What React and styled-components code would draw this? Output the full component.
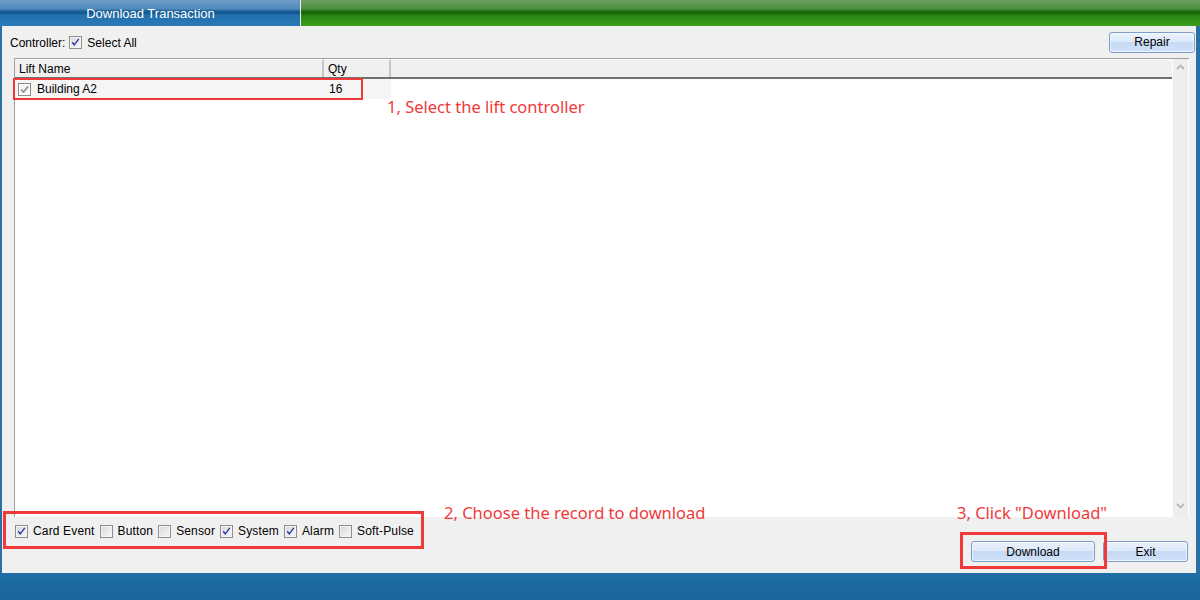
import React from 'react';
import styled, { createGlobalStyle } from 'styled-components';

const GlobalStyle = createGlobalStyle`
    html, body{
        margin: 0;
        padding: 0;
        background-color: #1b679e;
    }
    *{
        box-sizing: border-box;
    }
`;

const Frame = styled.div`
    position: relative;
    width: 1200px;
    height: 600px;
    display: flex;
    flex-direction: column;
    font-family: 'Liberation Sans', Arial, sans-serif;
    font-size: 12px;
    color: #000000;
    overflow: hidden;
`;

const TitleBar = styled.div`
    height: 26px;
    display: flex;

    .tab{
        width: 300px;
        display: flex;
        justify-content: center;
        align-items: center;
        color: #ffffff;
        font-size: 13px;
        padding-left: 1px;
        background: linear-gradient(to bottom, #6e9cc5 0px, #5089bb 9px, #1b5f97 11px, #0f5592 13px, #236fab 15px, #2b7aba 26px);
    }

    .divider{
        width: 1px;
        background-color: #e8f0e4;
    }

    .fill{
        flex: 1;
        background: linear-gradient(to bottom, #6c9f62 0px, #4e8e40 9px, #1f6c10 11px, #176508 13px, #2a8712 16px, #3b9d1c 26px);
    }
`;

const Body = styled.div`
    flex: 1;
    display: flex;
    flex-direction: column;
    background-color: #f0f0f0;
    border-left: 2px solid #2a6fa6;
    border-right: 4px solid #2a6fa6;
`;

const Toolbar = styled.div`
    height: 32px;
    display: flex;
    align-items: center;
    justify-content: space-between;
    padding: 0 1px 0 8px;

    .controller{
        display: flex;
        align-items: center;
        gap: 4px;
        padding-top: 1px;
    }
`;

const CheckLabel = styled.label`
    display: inline-flex;
    align-items: center;
    gap: ${p => p.gap || 5}px;
    white-space: nowrap;
`;

const Box = styled.span`
    width: 13px;
    height: 13px;
    display: inline-flex;
    justify-content: center;
    align-items: center;
    border: 1px solid ${p => p.muted ? '#8a8a8a' : '#8e8f8f'};
    background: ${p => p.muted
        ? '#f4f4f4'
        : 'linear-gradient(135deg, #d8d8d8 0%, #ececec 60%, #f8f8f8 100%)'};
    box-shadow: inset 0 0 0 1px ${p => p.muted ? '#ffffff' : '#f4f4f4'};

    svg{
        display: block;
    }
`;

const Check = ({ checked, muted }) => (
    <Box muted={muted}>
        {checked && (
            <svg width="9" height="9" viewBox="0 0 9 9">
                <path
                    d={muted ? 'M1 4.5 L3.5 7 L8 1.5' : 'M1.2 4.2 L3.3 6.8 L7.8 0.8'}
                    fill="none"
                    stroke={muted ? '#8c8c8c' : '#2b3bab'}
                    strokeWidth={muted ? 1.6 : 1.4}
                />
            </svg>
        )}
    </Box>
);

const Button = styled.button`
    width: ${p => p.width}px;
    height: 21px;
    padding: 0;
    font-family: 'Liberation Sans', Arial, sans-serif;
    font-size: 12px;
    color: #000000;
    border: 1px solid #7c9dc8;
    border-radius: 3px;
    background: linear-gradient(to bottom, #eaf2fc 0%, #dde9f9 45%, #c6daf5 50%, #d0e1f8 100%);
    box-shadow: inset 0 0 0 1px rgba(255, 255, 255, 0.6);
    cursor: default;
`;

const Grid = styled.div`
    height: 459px;
    margin: 0 7px 0 12px;
    display: flex;
    border-top: 1px solid #a0a0a0;
    border-left: 1px solid #a0a0a0;
    background-color: #ffffff;

    .main{
        flex: 1;
        display: flex;
        flex-direction: column;
    }
`;

const HeaderRow = styled.div`
    height: 20px;
    display: flex;
    background-color: #f0f0f0;
    border-bottom: 2px solid #707070;
`;

const HeadCell = styled.div`
    width: ${p => p.width ? `${p.width}px` : 'auto'};
    flex: ${p => p.width ? 'none' : 1};
    display: flex;
    align-items: center;
    padding-left: 4px;
    border-right: ${p => p.width ? '2px solid #c6c6c6' : 'none'};
    border-top: 1px solid #ffffff;
`;

const DataRow = styled.div`
    height: 20px;
    width: 376px;
    display: flex;
    align-items: center;
    background-color: #f5f5f5;

    .name{
        width: 309px;
        display: flex;
        align-items: center;
        gap: 6px;
        padding-left: 3px;
    }

    .qty{
        padding-left: 5px;
    }
`;

const ScrollBar = styled.div`
    width: 17px;
    display: flex;
    flex-direction: column;
    justify-content: space-between;
    align-items: center;
    background-color: #eeeeee;
    border-left: 1px solid #ffffff;
    border-right: 1px solid #ffffff;
    padding: 5px 0 8px;
`;

const Chevron = ({ down }) => (
    <svg width="9" height="6" viewBox="0 0 9 6">
        <path
            d={down ? 'M1 1 L4.5 4.5 L8 1' : 'M1 5 L4.5 1.5 L8 5'}
            fill="none"
            stroke="#b8b8b8"
            strokeWidth="1.8"
        />
    </svg>
);

const Footer = styled.div`
    flex: 1;
    display: flex;
    justify-content: space-between;
    padding: 7px 8px 11px 13px;

    .options{
        align-self: flex-start;
        display: flex;
        align-items: center;
        gap: 5px;
        letter-spacing: 0.15px;
    }

    .actions{
        align-self: flex-end;
        display: flex;
        gap: 8px;
    }
`;

const BottomBar = styled.div`
    height: 27px;
    background: linear-gradient(to bottom, #1f6ea6 0%, #1a659c 100%);
`;

const Callout = styled.div`
    position: absolute;
    left: ${p => p.x}px;
    top: ${p => p.y}px;
    font-family: 'Noto Sans', 'Open Sans', sans-serif;
    font-size: 16.5px;
    line-height: 20px;
    color: #f03a3a;
    white-space: nowrap;
`;

const Frame2 = styled.div`
    position: absolute;
    left: ${p => p.x}px;
    top: ${p => p.y}px;
    width: ${p => p.w}px;
    height: ${p => p.h}px;
    border: ${p => p.thick}px solid #f03a3a;
`;

const records = [
    { label: 'Card Event', checked: true },
    { label: 'Button', checked: false },
    { label: 'Sensor', checked: false },
    { label: 'System', checked: true },
    { label: 'Alarm', checked: true },
    { label: 'Soft-Pulse', checked: false },
];

const App = () => {
    return (
        <Frame>
            <GlobalStyle />
            <TitleBar>
                <div className='tab'>Download Transaction</div>
                <div className='divider' />
                <div className='fill' />
            </TitleBar>
            <Body>
                <Toolbar>
                    <div className='controller'>
                        <span>Controller:</span>
                        <CheckLabel gap={5}>
                            <Check checked />
                            <span>Select All</span>
                        </CheckLabel>
                    </div>
                    <Button width={86}>Repair</Button>
                </Toolbar>
                <Grid>
                    <div className='main'>
                        <HeaderRow>
                            <HeadCell width={309}>Lift Name</HeadCell>
                            <HeadCell width={67}>Qty</HeadCell>
                            <HeadCell />
                        </HeaderRow>
                        <DataRow>
                            <div className='name'>
                                <Check checked muted />
                                <span>Building A2</span>
                            </div>
                            <div className='qty'>16</div>
                        </DataRow>
                    </div>
                    <ScrollBar>
                        <Chevron />
                        <Chevron down />
                    </ScrollBar>
                </Grid>
                <Footer>
                    <div className='options'>
                        {records.map(record => (
                            <CheckLabel key={record.label} gap={5}>
                                <Check checked={record.checked} />
                                <span>{record.label}</span>
                            </CheckLabel>
                        ))}
                    </div>
                    <div className='actions'>
                        <Button width={124}>Download</Button>
                        <Button width={85}>Exit</Button>
                    </div>
                </Footer>
            </Body>
            <BottomBar />

            <Frame2 x={13} y={78} w={350} h={22} thick={2} />
            <Frame2 x={3} y={511} w={421} h={38} thick={3} />
            <Frame2 x={960} y={532} w={147} h={37} thick={3} />
            <Callout x={387} y={97}>1, Select the lift controller</Callout>
            <Callout x={444} y={503}>2, Choose the record to download</Callout>
            <Callout x={957} y={503}>3, Click "Download"</Callout>
        </Frame>
    );
};

export default App;
